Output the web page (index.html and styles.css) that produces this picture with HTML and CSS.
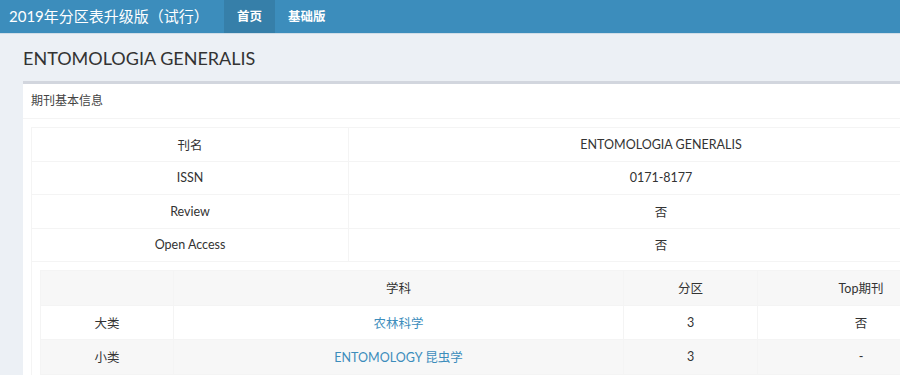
FILE: index.html
```html
<!DOCTYPE html>
<html lang="zh">
<head>
<meta charset="utf-8">
<title>2019年分区表升级版（试行）</title>
<link rel="stylesheet" href="styles.css">
</head>
<body>
<header class="navbar">
  <div class="brand">2019年分区表升级版（试行）</div>
  <nav class="nav">
    <a class="nav-link active">首页</a>
    <a class="nav-link">基础版</a>
  </nav>
</header>
<main class="content">
  <h1 class="page-title">ENTOMOLOGIA GENERALIS</h1>
  <section class="box">
    <div class="box-header">期刊基本信息</div>
    <div class="box-body">
      <table class="info">
        <tr><td class="c-label">刊名</td><td class="c-val">ENTOMOLOGIA GENERALIS</td></tr>
        <tr><td class="c-label">ISSN</td><td class="c-val">0171-8177</td></tr>
        <tr><td class="c-label">Review</td><td class="c-val">否</td></tr>
        <tr><td class="c-label">Open Access</td><td class="c-val">否</td></tr>
        <tr>
          <td colspan="2" class="nest-cell">
            <table class="zone">
              <tr class="odd"><td class="z1"></td><td class="z2">学科</td><td class="z3">分区</td><td class="z4">Top期刊</td></tr>
              <tr><td>大类</td><td><a class="link">农林科学</a></td><td>3</td><td>否</td></tr>
              <tr class="odd"><td>小类</td><td><a class="link">ENTOMOLOGY 昆虫学</a></td><td>3</td><td>-</td></tr>
            </table>
          </td>
        </tr>
      </table>
    </div>
  </section>
</main>
</body>
</html>
```
FILE: styles.css
```css
html, body {
  margin: 0;
  padding: 0;
  overflow: hidden;
  width: 900px;
  height: 375px;
}
body {
  font-family: "Lato", "Noto Sans CJK SC", sans-serif;
  color: #333;
  background: #ecf0f5;
  font-size: 12.5px;
}
.navbar {
  display: flex;
  align-items: stretch;
  height: 33px;
  background: #3c8dbc;
  border-bottom: 1px solid #d0dde7;
}
.brand {
  color: #fff;
  font-size: 15px;
  line-height: 33px;
  padding-left: 9px;
  width: 215px;
}
.nav {
  display: flex;
}
.nav-link {
  color: #fff;
  font-size: 12.5px;
  font-weight: bold;
  line-height: 33px;
  padding: 0 13px;
}
.nav-link.active {
  background: #367fa9;
}
.content {
  padding-left: 23px;
  width: 980px;
}
.page-title {
  margin: 0;
  font-weight: normal;
  font-size: 18px;
  line-height: 24px;
  padding-top: 12px;
  height: 35px;
  color: #333;
}
.box {
  background: #fff;
  border-top: 3px solid #d2d6de;
  width: 957px;
}
.box-header {
  padding: 0 8px;
  height: 34px;
  line-height: 34px;
  font-size: 12px;
  color: #444;
  border-bottom: 1px solid #f4f4f4;
}
.box-body {
  padding: 8px;
}
.info, .zone {
  border-collapse: collapse;
  text-align: center;
}
.info {
  width: 941px;
}
.info td {
  border: 1px solid #f4f4f4;
  height: 32.5px;
  padding: 0 8px;
}
.info .c-label {
  width: 300px;
}
.info td.nest-cell {
  padding: 8px;
  height: auto;
}
.zone {
  width: 925px;
}
.zone td {
  border: 1px solid #f4f4f4;
  height: 33.5px;
  padding: 0 8px;
}
.zone tr.odd td {
  background: #f7f7f7;
}
.zone .z1 { width: 116px; }
.zone .z2 { width: 433px; }
.zone .z3 { width: 117px; }
.link {
  color: #3c8dbc;
  text-decoration: none;
}
```
